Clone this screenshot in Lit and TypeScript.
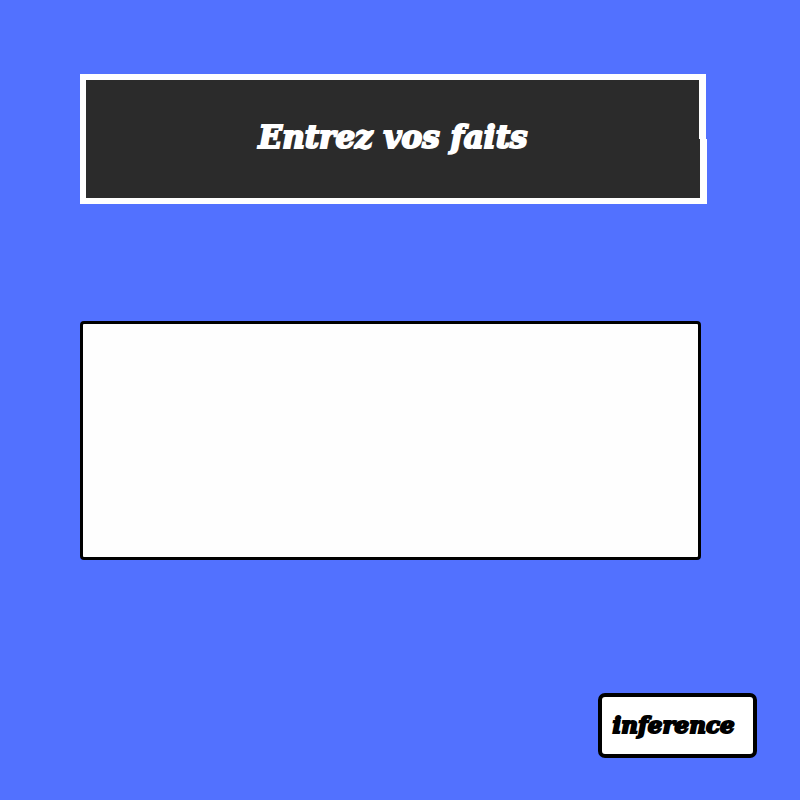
import { LitElement, html, css } from "lit";
import { customElement, state } from "lit/decorators.js";

@customElement("app-root")
export class AppRoot extends LitElement {
  static styles = css`
    :host {
      display: block;
      font-family: "DejaVu Serif", serif;
      font-style: italic;
      font-weight: 700;
    }
    .page {
      box-sizing: border-box;
      min-height: 100vh;
      padding: 74px 43px 42px 80px;
      display: flex;
      flex-direction: column;
      background: #5271ff;
    }
    .banner {
      position: relative;
      box-sizing: border-box;
      min-height: 130px;
      margin: 0 51px 0 0;
      padding: 0 0 4px;
      border: 6px solid #fff;
      display: flex;
      align-items: center;
      justify-content: center;
      background: #2b2b2b;
    }
    /* The frame's right side is stepped: its lower half sits further out. */
    .banner::before,
    .banner::after {
      content: "";
      position: absolute;
      width: 1px;
      background: #fff;
    }
    .banner::before {
      top: 0;
      right: 0;
      bottom: 50%;
    }
    .banner::after {
      top: 50%;
      right: -7px;
      bottom: -6px;
    }
    .title {
      margin: 0;
      font-size: 31px;
      line-height: 36px;
      color: #fff;
      -webkit-text-stroke: 2px #fff;
    }
    .facts {
      box-sizing: border-box;
      height: 239px;
      margin: 117px 56px 0 0;
      padding: 16px;
      border: 3px solid #000;
      border-radius: 4px;
      background: #fefefe;
      color: #000;
      font: inherit;
      font-size: 20px;
      resize: none;
      outline: none;
    }
    .run {
      box-sizing: border-box;
      align-self: flex-end;
      min-width: 159px;
      height: 65px;
      margin: auto 0 0;
      padding: 0 8px 2px 0;
      border: 4px solid #000;
      border-radius: 7px;
      background: #fff;
      color: #000;
      font: inherit;
      font-size: 23px;
      line-height: 28px;
      -webkit-text-stroke: 2px #000;
      cursor: pointer;
    }
  `;

  @state() private facts = "";

  render() {
    return html`
      <main class="page">
        <header class="banner">
          <h1 class="title" id="title">Entrez vos faits</h1>
        </header>
        <textarea
          class="facts"
          aria-labelledby="title"
          .value=${this.facts}
          @input=${(e: Event) => {
            this.facts = (e.target as HTMLTextAreaElement).value;
          }}
        ></textarea>
        <button class="run" type="button">inference</button>
      </main>
    `;
  }
}
